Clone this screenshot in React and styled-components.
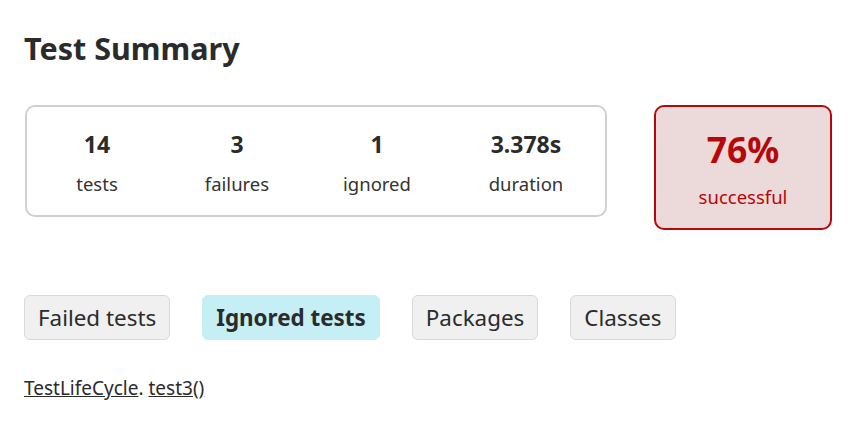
import styled, {createGlobalStyle} from "styled-components";

const GlobalStyle = createGlobalStyle`
    body {
        margin: 0;
        background: #fff;
        color: #333;
        font-family: "Noto Sans", "Open Sans", sans-serif;
    }
`;

const Page = styled.div`
    padding: 24px 24px 0 24px;
`;

const Title = styled.h1`
    margin: 0;
    font-size: 30.5px;
    font-weight: 700;
    line-height: 48px;
    color: #2b2b2b;
`;

const SummaryRow = styled.div`
    display: flex;
    align-items: flex-start;
    gap: 47px;
    margin-top: 33px;
    padding-left: 1px;
`;

const InfoBox = styled.div`
    display: flex;
    width: 578px;
    height: 105px;
    padding-top: 3px;
    border: 2px solid #d0d0d0;
    border-radius: 10px;
    align-items: center;
`;

const Counter = styled.div`
    width: ${({wide}) => (wide ? 158 : 140)}px;
    display: flex;
    flex-direction: column;
    align-items: center;
    gap: 14px;
`;

const Value = styled.div`
    font-size: 23px;
    font-weight: 700;
    line-height: 28px;
    color: #2b2b2b;
`;

const Label = styled.div`
    font-size: 18.5px;
    line-height: 24px;
    color: #333;
`;

const SuccessBox = styled.div`
    width: 174px;
    height: 118px;
    padding-top: 3px;
    border: 2px solid #b60808;
    border-radius: 10px;
    background: #ecd9da;
    color: #b60808;
    display: flex;
    flex-direction: column;
    align-items: center;
    justify-content: center;
    gap: 16px;
`;

const Percent = styled.div`
    font-size: 35.5px;
    font-weight: 700;
    line-height: 40px;
`;

const SuccessLabel = styled.div`
    font-size: 18.5px;
    line-height: 24px;
`;

const Tabs = styled.div`
    display: flex;
    gap: 32px;
    margin-top: 65px;
`;

const Tab = styled.div`
    height: 43px;
    padding: 0 13px;
    display: flex;
    align-items: center;
    font-size: 22.4px;
    border-radius: 6px;
    border: 1px solid ${({active}) => (active ? "#c5eff5" : "#d9d9d9")};
    background: ${({active}) => (active ? "#c5eff5" : "#f0f0f0")};
    font-weight: ${({active}) => (active ? 700 : 400)};
    color: #2b2b2b;
`;

const TestLine = styled.div`
    margin-top: 35px;
    font-size: 19px;
    color: #2b2b2b;
`;

const Link = styled.a`
    color: #2b2b2b;
    text-decoration: underline;
`;

const counters = [
    {value: "14", label: "tests"},
    {value: "3", label: "failures"},
    {value: "1", label: "ignored"},
    {value: "3.378s", label: "duration"},
];

const tabs = ["Failed tests", "Ignored tests", "Packages", "Classes"];

const App = () => {
    return (
        <>
            <GlobalStyle/>
            <Page>
                <Title>Test Summary</Title>

                <SummaryRow>
                    <InfoBox>
                        {counters.map((counter, index) =>
                            <Counter key={counter.label} wide={index === 3}>
                                <Value>{counter.value}</Value>
                                <Label>{counter.label}</Label>
                            </Counter>
                        )}
                    </InfoBox>

                    <SuccessBox>
                        <Percent>76%</Percent>
                        <SuccessLabel>successful</SuccessLabel>
                    </SuccessBox>
                </SummaryRow>

                <Tabs>
                    {tabs.map(tab =>
                        <Tab key={tab} active={tab === "Ignored tests"}>{tab}</Tab>
                    )}
                </Tabs>

                <TestLine>
                    <Link href="#">TestLifeCycle</Link>. <Link href="#">test3()</Link>
                </TestLine>
            </Page>
        </>
    );
};

export default App;
